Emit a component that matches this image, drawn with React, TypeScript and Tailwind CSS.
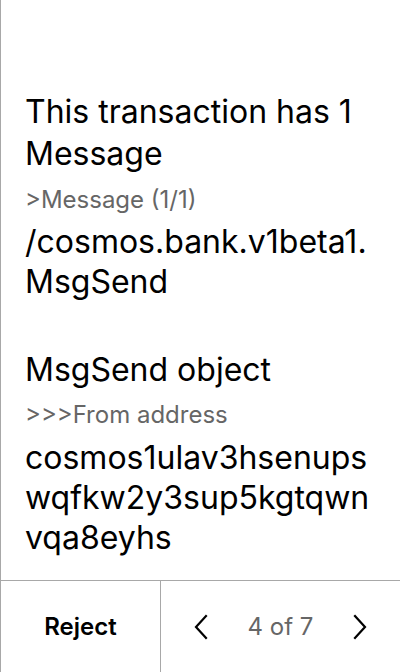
import React from "react";

export default function App() {
  return (
    <div
      className="w-[400px] h-[672px] flex flex-col bg-white border-l border-[#a8a8a8] text-black overflow-hidden"
      style={{ fontFamily: "Inter, 'Noto Sans', sans-serif" }}
    >
      <div className="flex-1 flex flex-col pl-6 pr-[14px] pt-[91px]">
        <div className="flex flex-col">
          <div className="text-[32px] leading-[42px]">This transaction has 1 Message</div>
          <div className="text-[24px] leading-[32px] text-[#666] mt-[9px]">&gt;Message (1/1)</div>
          <div className="text-[32px] leading-[40px] mt-[6px] break-all">/cosmos.bank.v1beta1.MsgSend</div>
        </div>
        <div className="flex flex-col mt-[48px]">
          <div className="text-[32px] leading-[40px]">MsgSend object</div>
          <div className="text-[24px] leading-[32px] text-[#666] mt-[9px]">&gt;&gt;&gt;From address</div>
          <div className="text-[32px] leading-[40px] mt-[7px] break-all">cosmos1ulav3hsenupswqfkw2y3sup5kgtqwnvqa8eyhs</div>
        </div>
      </div>
      <div className="h-[92px] flex border-t border-[#a8a8a8]">
        <div className="w-[160px] flex items-center justify-center border-r border-[#a8a8a8] text-[24px] font-semibold">
          Reject
        </div>
        <div className="flex-1 flex items-center justify-between pl-[28px] pr-[28px]">
          <svg width="24" height="28" viewBox="0 0 24 28" fill="none" stroke="black" strokeWidth="2.2" strokeLinecap="square">
            <path d="M17 3 L7 14 L17 25" />
          </svg>
          <span className="text-[24px] text-[#666]">4 of 7</span>
          <svg width="24" height="28" viewBox="0 0 24 28" fill="none" stroke="black" strokeWidth="2.2" strokeLinecap="square">
            <path d="M7 3 L17 14 L7 25" />
          </svg>
        </div>
      </div>
    </div>
  );
}
